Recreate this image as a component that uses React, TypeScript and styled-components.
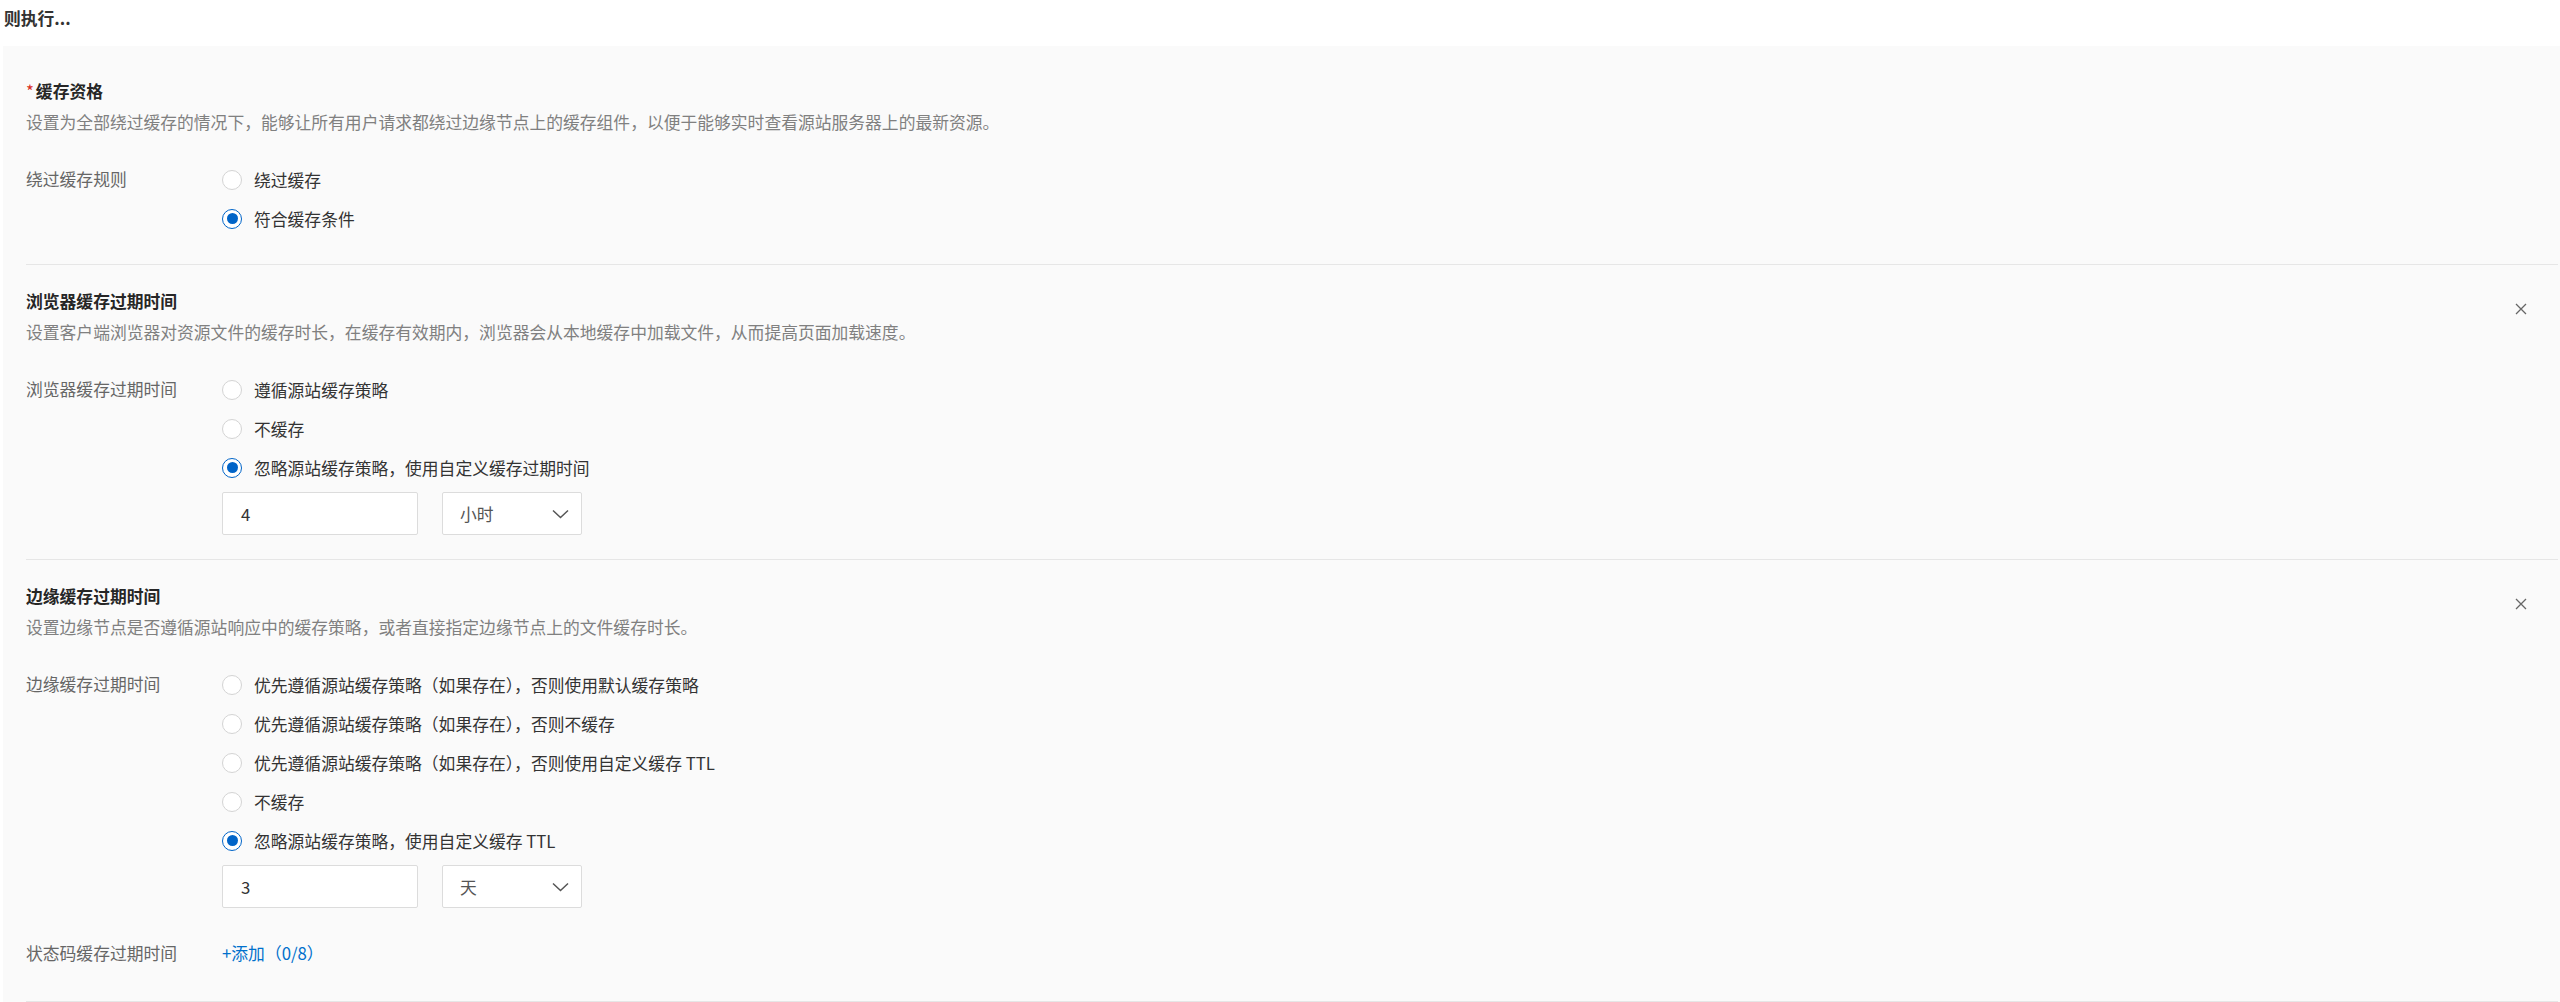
import React from 'react'
import styled, {createGlobalStyle} from 'styled-components'

const GlobalStyle = createGlobalStyle`
  html, body {
    margin: 0;
    padding: 0;
    background: #fff;
  }
  body {
    font-family: "Noto Sans CJK SC", "Noto Sans", "Liberation Sans", sans-serif;
    font-size: 16.8px;
    color: #333;
  }
`

const Page = styled.div`
  display: flex;
  flex-direction: column;
`

const Title = styled.div`
  padding: 6px 0 0 4px;
  line-height: 24px;
  font-weight: 700;
  color: #333;
`

const Panel = styled.div`
  margin: 16px 0 0 3px;
  padding: 9px 2px 0 23px;
  background: #fafafa;
`

const Section = styled.section<{$pb?: number}>`
  padding: 24px 31px ${(p) => p.$pb ?? 26}px 0;
  border-bottom: 1px solid #e6e6e6;
`

const SectionHeader = styled.div`
  display: flex;
  justify-content: space-between;
  align-items: flex-start;
  height: 24px;
`

const Heading = styled.h3`
  margin: 0;
  line-height: 24px;
  font-size: 16.8px;
  font-weight: 700;
  color: #262626;
`

const Required = styled.span`
  color: #d93026;
  font-weight: 400;
  margin-right: 2px;
`

const Desc = styled.p`
  margin: 7px 0 0;
  line-height: 24px;
  color: #808080;
`

const CloseButton = styled.button`
  margin-top: 14px;
  width: 12px;
  height: 12px;
  padding: 0;
  border: none;
  background: none;
  display: flex;
  cursor: pointer;
`

const FormRow = styled.div`
  display: flex;
  margin-top: 26px;
`

const FieldLabel = styled.div`
  width: 196px;
  flex-shrink: 0;
  line-height: 39px;
  color: #666;
`

const FieldBody = styled.div`
  display: flex;
  flex-direction: column;
`

const RadioOption = styled.label`
  display: flex;
  align-items: center;
  height: 39px;
  gap: 12px;
  color: #333;
  cursor: pointer;
`

const RadioCircle = styled.span<{checked: boolean}>`
  box-sizing: border-box;
  width: 20px;
  height: 20px;
  border-radius: 50%;
  background: #fff;
  border: ${(p) => (p.checked ? '1.5px solid #0064c8' : '1px solid #d4d4d4')};
  display: flex;
  align-items: center;
  justify-content: center;

  &::after {
    content: '';
    display: ${(p) => (p.checked ? 'block' : 'none')};
    width: 11px;
    height: 11px;
    border-radius: 50%;
    background: #0064c8;
  }
`

const UnitRow = styled.div`
  display: flex;
  gap: 24px;
  margin-top: 5px;
`

const NumberInput = styled.div`
  box-sizing: border-box;
  width: 196px;
  height: 43px;
  padding: 0 18px;
  display: flex;
  align-items: center;
  background: #fff;
  border: 1px solid #dcdcdc;
  border-radius: 2px;
  color: #333;
`

const Select = styled.div`
  box-sizing: border-box;
  width: 140px;
  height: 43px;
  padding: 0 12px 0 17px;
  display: flex;
  align-items: center;
  justify-content: space-between;
  background: #fff;
  border: 1px solid #dcdcdc;
  border-radius: 2px;
  color: #555;
`

const AddLink = styled.a`
  line-height: 39px;
  color: #0070cc;
  text-decoration: none;
  cursor: pointer;
`

function Radio({label, checked}: {label: string; checked?: boolean}) {
  return (
    <RadioOption>
      <RadioCircle checked={!!checked} />
      <span>{label}</span>
    </RadioOption>
  )
}

function CloseIcon() {
  return (
    <svg width="12" height="12" viewBox="0 0 12 12">
      <path d="M1 1 L11 11 M11 1 L1 11" stroke="#666" strokeWidth="1.3" fill="none" />
    </svg>
  )
}

function Chevron() {
  return (
    <svg width="17" height="10" viewBox="0 0 17 10">
      <path d="M1 1.5 L8.5 8.5 L16 1.5" stroke="#555" strokeWidth="1.5" fill="none" />
    </svg>
  )
}

function Unit({value, unit}: {value: string; unit: string}) {
  return (
    <UnitRow>
      <NumberInput>{value}</NumberInput>
      <Select>
        <span>{unit}</span>
        <Chevron />
      </Select>
    </UnitRow>
  )
}

export default function App() {
  return (
    <Page>
      <GlobalStyle />
      <Title>则执行...</Title>
      <Panel>
        <Section>
          <SectionHeader>
            <Heading><Required>*</Required>缓存资格</Heading>
          </SectionHeader>
          <Desc>设置为全部绕过缓存的情况下，能够让所有用户请求都绕过边缘节点上的缓存组件，以便于能够实时查看源站服务器上的最新资源。</Desc>
          <FormRow>
            <FieldLabel>绕过缓存规则</FieldLabel>
            <FieldBody>
              <Radio label="绕过缓存" />
              <Radio label="符合缓存条件" checked />
            </FieldBody>
          </FormRow>
        </Section>

        <Section $pb={24}>
          <SectionHeader>
            <Heading>浏览器缓存过期时间</Heading>
            <CloseButton><CloseIcon /></CloseButton>
          </SectionHeader>
          <Desc>设置客户端浏览器对资源文件的缓存时长，在缓存有效期内，浏览器会从本地缓存中加载文件，从而提高页面加载速度。</Desc>
          <FormRow>
            <FieldLabel>浏览器缓存过期时间</FieldLabel>
            <FieldBody>
              <Radio label="遵循源站缓存策略" />
              <Radio label="不缓存" />
              <Radio label="忽略源站缓存策略，使用自定义缓存过期时间" checked />
              <Unit value="4" unit="小时" />
            </FieldBody>
          </FormRow>
        </Section>

        <Section $pb={28}>
          <SectionHeader>
            <Heading>边缘缓存过期时间</Heading>
            <CloseButton><CloseIcon /></CloseButton>
          </SectionHeader>
          <Desc>设置边缘节点是否遵循源站响应中的缓存策略，或者直接指定边缘节点上的文件缓存时长。</Desc>
          <FormRow>
            <FieldLabel>边缘缓存过期时间</FieldLabel>
            <FieldBody>
              <Radio label="优先遵循源站缓存策略（如果存在），否则使用默认缓存策略" />
              <Radio label="优先遵循源站缓存策略（如果存在），否则不缓存" />
              <Radio label="优先遵循源站缓存策略（如果存在），否则使用自定义缓存 TTL" />
              <Radio label="不缓存" />
              <Radio label="忽略源站缓存策略，使用自定义缓存 TTL" checked />
              <Unit value="3" unit="天" />
            </FieldBody>
          </FormRow>
          <FormRow>
            <FieldLabel>状态码缓存过期时间</FieldLabel>
            <FieldBody>
              <AddLink>+添加（0/8）</AddLink>
            </FieldBody>
          </FormRow>
        </Section>
      </Panel>
    </Page>
  )
}
